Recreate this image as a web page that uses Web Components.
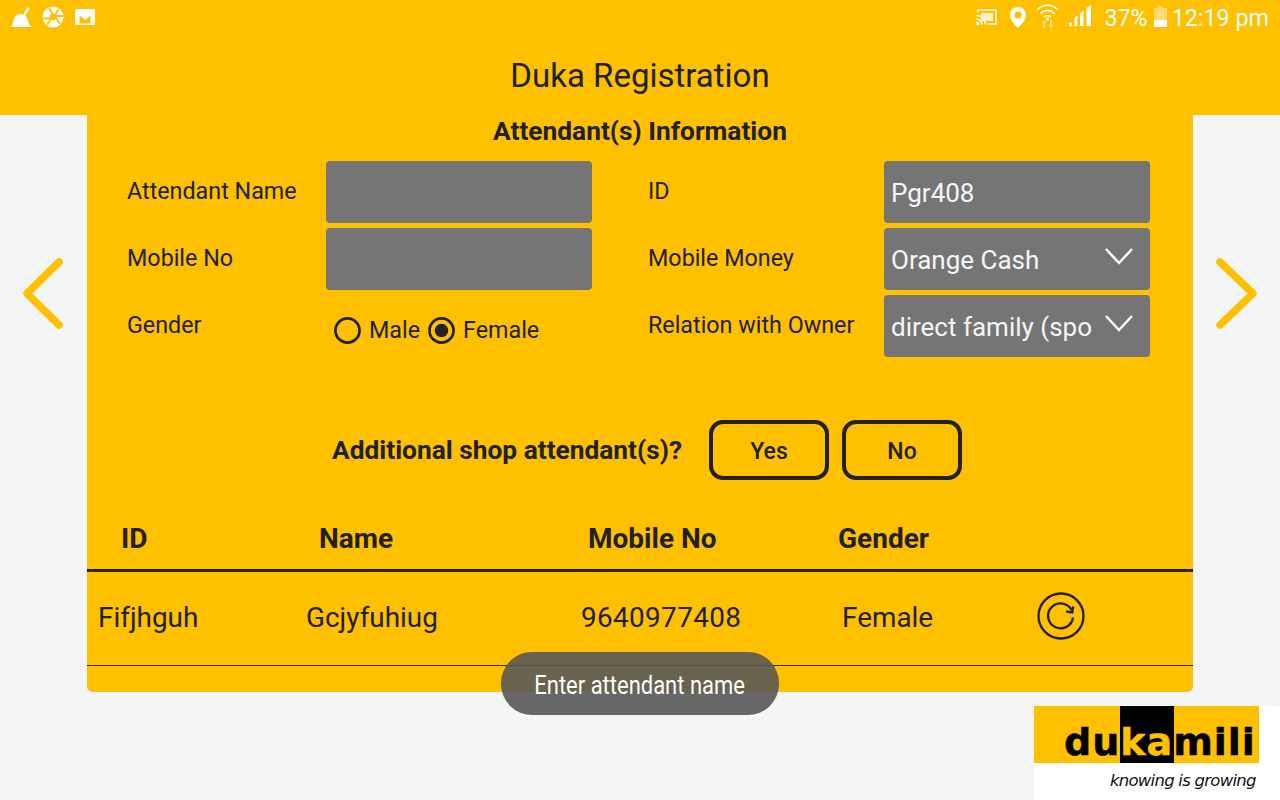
<!DOCTYPE html>
<html>
<head>
<meta charset="utf-8">
<title>Duka Registration</title>
<style>
  html,body{margin:0;height:100%}
  body{background:#f4f6f5;font-family:Roboto,"Noto Sans",sans-serif;color:#212121;overflow:hidden}
  dk-page{height:800px}
</style>
</head>
<body>
<dk-page>
  <dk-header slot="header">Duka Registration</dk-header>
  <dk-arrow slot="left" dir="left"></dk-arrow>
  <dk-card slot="card" heading="Attendant(s) Information">
    <dk-form slot="form">
      <dk-field label="Attendant Name"></dk-field>
      <dk-field label="ID" wide value="Pgr408"></dk-field>
      <dk-field label="Mobile No"></dk-field>
      <dk-field label="Mobile Money" wide value="Orange Cash" select></dk-field>
      <dk-field label="Gender" plain>
        <dk-radio>Male</dk-radio>
        <dk-radio checked>Female</dk-radio>
      </dk-field>
      <dk-field label="Relation with Owner" wide value="direct family (spo" select></dk-field>
    </dk-form>
    <dk-ask slot="ask" question="Additional shop attendant(s)?">
      <dk-button>Yes</dk-button>
      <dk-button>No</dk-button>
    </dk-ask>
    <dk-table slot="table"></dk-table>
  </dk-card>
  <dk-arrow slot="right" dir="right"></dk-arrow>
  <dk-toast slot="overlay">Enter attendant name</dk-toast>
  <dk-logo slot="overlay"></dk-logo>
</dk-page>

<script>
const YELLOW = "#ffc000";

class DkPage extends HTMLElement {
  constructor() { super(); this.attachShadow({ mode: "open" }); }
  connectedCallback() {
    this.shadowRoot.innerHTML = `
      <style>
        :host{display:grid;grid-template-columns:87px 1106px 87px;grid-template-rows:115px 577px 1fr;position:relative}
        .top{grid-column:1 / 4}
        .side{display:block}
      </style>
      <div class="top"><slot name="header"></slot></div>
      <div class="side"><slot name="left"></slot></div>
      <div><slot name="card"></slot></div>
      <div class="side"><slot name="right"></slot></div>
      <slot name="overlay"></slot>`;
  }
}

class DkHeader extends HTMLElement {
  constructor() { super(); this.attachShadow({ mode: "open" }); }
  connectedCallback() {
    this.shadowRoot.innerHTML = `
      <style>
        :host{display:block;height:115px;background:${YELLOW}}
        h1{margin:0;padding-top:2px;font:400 33px/76px Roboto,sans-serif;color:#212121;text-align:center}
      </style>
      <dk-status></dk-status>
      <h1><slot></slot></h1>`;
  }
}

class DkStatus extends HTMLElement {
  constructor() { super(); this.attachShadow({ mode: "open" }); }
  connectedCallback() {
    this.shadowRoot.innerHTML = `
      <style>
        :host{display:flex;justify-content:space-between;height:36px;color:#fff;font:400 23.300px/36px Roboto,sans-serif}
        .l,.r{display:flex;align-items:flex-start}
        .l{padding-left:10px}
        .r{padding-right:11px}
        svg{display:block}
        span{white-space:nowrap}
      </style>
      <div class="l">
        <!-- broom -->
        <svg width="23" height="20" viewBox="0 0 23 20" style="margin-top:7px"><path fill="#fff" d="M17 0l3 2-5 6c1.500 1.500 2.500 3.500 3 6 .5 2 1.500 4 4 6H0c3-2 3-5 4-8 .7-3 3-5 6-5 1.500 0 3 .3 3.500 1z"/></svg>
        <!-- aperture -->
        <svg width="22" height="22" viewBox="0 0 22 22" style="margin:6px 0 0 9px"><circle cx="11" cy="11" r="10.500" fill="#fff"/><g stroke="#ffc000" stroke-width="1.800" fill="none"><path d="M7 2.200L13.500 12M16.500 2.800L10.500 13.800M20.800 10H9.500M18 18L11.500 8.500M5 19L11.500 8.500M1.200 12.500h11.500"/></g><polygon points="11,7.500 14.200,9.300 14.200,12.800 11,14.600 7.800,12.800 7.800,9.300" fill="#ffc000"/></svg>
        <!-- gmail -->
        <svg width="20" height="16" viewBox="0 0 20 16" style="margin:9px 0 0 11px"><rect width="20" height="16" rx="1.500" fill="#fff"/><path fill="#ffc000" d="M4.500 6.500L10 11l5.500-4.500v8h-11z"/></svg>
      </div>
      <div class="r">
        <!-- cast -->
        <svg width="21" height="16" viewBox="0 0 21 16" style="margin-top:9px"><path fill="none" stroke="#fff" stroke-width="1.600" d="M2 3.500V1h18v14h-8"/><rect x="5" y="4" width="12" height="8" fill="#fff" opacity=".75"/><path fill="none" stroke="#fff" stroke-width="1.600" d="M.5 6.500c5 0 9 4 9 9M.5 10c3 0 5.500 2.500 5.500 5.500"/><circle cx="1.800" cy="14.200" r="1.800" fill="#fff"/></svg>
        <!-- pin -->
        <svg width="16" height="21" viewBox="0 0 16 21" style="margin:7px 0 0 13px"><path fill="#fff" fill-rule="evenodd" d="M8 0a8 8 0 0 1 8 8c0 4.500-4.500 9.500-8 13C4.500 17.500 0 12.500 0 8a8 8 0 0 1 8-8zm0 4.500a3.500 3.500 0 1 0 0 7 3.500 3.500 0 0 0 0-7z"/></svg>
        <!-- wifi with up/down arrows -->
        <svg width="23" height="24" viewBox="0 0 23 24" style="margin:4px 0 0 10px"><g fill="none" stroke="#fff" stroke-width="1.700"><path d="M1 6c6-6.300 15-6.300 21 0"/><path d="M4.500 9.500c4-4 10-4 14 0"/><path d="M8 13c2-2 5-2 7 0"/></g><circle cx="11.500" cy="15" r="1.500" fill="#fff"/><path fill="#fff" opacity=".55" d="M8 16l2.500 3H9v5H7v-5H5.500zM15 24l-2.500-3H14v-5h2v5h1.500z"/></svg>
        <!-- signal -->
        <svg width="22" height="21" viewBox="0 0 22 21" style="margin:5px 0 0 10px"><path fill="#fff" d="M0 17.500h3V21H0zM5.500 13l3-2.500V21h-3zM11 8.500l3.500-3V21H11zM17.500 3L22 0v21h-4.500z"/></svg>
        <span style="margin-left:13px">37%</span>
        <!-- battery -->
        <svg width="13" height="21" viewBox="0 0 13 21" style="margin:6px 0 0 6px"><path fill="#fff" opacity=".45" d="M4 0h5v2h4v12H0V2h4z"/><rect y="14" width="13" height="7" fill="#fff"/></svg>
        <span style="margin-left:5px">12:19 pm</span>
      </div>`;
  }
}

class DkArrow extends HTMLElement {
  constructor() { super(); this.attachShadow({ mode: "open" }); }
  connectedCallback() {
    const left = this.getAttribute("dir") === "left";
    this.shadowRoot.innerHTML = `
      <style>
        :host{display:block;padding-top:143px}
        svg{display:block}
      </style>
      <svg width="87" height="72" viewBox="0 0 87 72">
        <polyline fill="none" stroke="${YELLOW}" stroke-width="7.500" stroke-linecap="round" stroke-linejoin="round"
          points="${left ? "59,4 27,35.500 59,67" : "27,4 60,35.500 27,67"}"></polyline>
      </svg>`;
  }
}

class DkCard extends HTMLElement {
  constructor() { super(); this.attachShadow({ mode: "open" }); }
  connectedCallback() {
    this.shadowRoot.innerHTML = `
      <style>
        :host{display:block;height:577px;background:${YELLOW};border-radius:0 0 6px 6px}
        h2{margin:0;font:700 26.300px/32px Roboto,sans-serif;text-align:center;color:#212121;padding-bottom:2px}
      </style>
      <h2>${this.getAttribute("heading")}</h2>
      <slot name="form"></slot>
      <slot name="ask"></slot>
      <slot name="table"></slot>`;
  }
}

class DkForm extends HTMLElement {
  constructor() { super(); this.attachShadow({ mode: "open" }); }
  connectedCallback() {
    this.shadowRoot.innerHTML = `
      <style>
        :host{display:grid;grid-template-columns:521px 502px;grid-auto-rows:62px;row-gap:5px;padding:12px 0 0 40px}
      </style>
      <slot></slot>`;
  }
}

class DkField extends HTMLElement {
  constructor() { super(); this.attachShadow({ mode: "open" }); }
  connectedCallback() {
    const value = this.getAttribute("value") || "";
    const chevron = this.hasAttribute("select")
      ? `<svg width="30" height="18" viewBox="0 0 30 18"><polyline points="2,2 15,16 28,2" fill="none" stroke="#fff" stroke-width="2.500"/></svg>`
      : "";
    const control = this.hasAttribute("plain")
      ? `<div class="radios"><slot></slot></div>`
      : `<div class="box"><span>${value}</span>${chevron}</div>`;
    this.shadowRoot.innerHTML = `
      <style>
        :host{display:grid;grid-template-columns:${this.hasAttribute("wide") ? 236 : 199}px 266px;height:62px}
        label{font:400 23.300px/60px Roboto,sans-serif;color:#212121;white-space:nowrap}
        .box{position:relative;background:#757575;border-radius:4px;color:#f5f5f5;font:400 26px/64px Roboto,sans-serif;padding-left:7px;white-space:nowrap;overflow:hidden}
        .box svg{position:absolute;right:16px;top:19px}
        .radios{display:flex;align-items:center;padding:8px 0 0 8px;gap:8px}
      </style>
      <label>${this.getAttribute("label")}</label>
      ${control}`;
  }
}

class DkRadio extends HTMLElement {
  constructor() { super(); this.attachShadow({ mode: "open" }); }
  connectedCallback() {
    const dot = this.hasAttribute("checked") ? `<circle cx="14" cy="14" r="7" fill="#212121"/>` : "";
    this.shadowRoot.innerHTML = `
      <style>
        :host{display:inline-flex;align-items:center;gap:8px;font:400 23.300px/28px Roboto,sans-serif;color:#212121}
        svg{display:block}
      </style>
      <svg width="27" height="27" viewBox="0 0 28 28"><circle cx="14" cy="14" r="12.500" fill="none" stroke="#212121" stroke-width="2.800"/>${dot}</svg>
      <slot></slot>`;
  }
}

class DkAsk extends HTMLElement {
  constructor() { super(); this.attachShadow({ mode: "open" }); }
  connectedCallback() {
    this.shadowRoot.innerHTML = `
      <style>
        :host{display:flex;align-items:center;margin-top:63px;padding-left:245px;height:60px}
        b{font:700 26.300px/60px Roboto,sans-serif;color:#212121;width:377px;white-space:nowrap}
        .btns{display:flex;gap:13px}
      </style>
      <b>${this.getAttribute("question")}</b>
      <div class="btns"><slot></slot></div>`;
  }
}

class DkButton extends HTMLElement {
  constructor() { super(); this.attachShadow({ mode: "open" }); }
  connectedCallback() {
    this.shadowRoot.innerHTML = `
      <style>
        :host{display:flex;align-items:center;justify-content:center;box-sizing:border-box;width:120px;height:60px;border:4px solid #212121;border-radius:14px;padding-top:2px;font:500 23px/1 Roboto,sans-serif;color:#212121}
      </style>
      <slot></slot>`;
  }
}

class DkTable extends HTMLElement {
  constructor() { super(); this.attachShadow({ mode: "open" }); }
  connectedCallback() {
    this.shadowRoot.innerHTML = `
      <style>
        :host{display:block;margin-top:29px;color:#212121}
        .head,.row{display:grid;align-items:center;white-space:nowrap}
        .head{grid-template-columns:198px 269px 250px 1fr;padding-left:34px;height:60px;border-bottom:3px solid #2a2118;font:700 28px/58px Roboto,sans-serif}
        .row{grid-template-columns:208px 275px 261px 195px 1fr;padding:0 0 2px 11px;height:91px;border-bottom:1px solid #2a2118;font:400 27.900px/40px Roboto,sans-serif}
        .num{letter-spacing:.35px}
        svg{display:block;margin:-3px 0 0 0}
      </style>
      <div class="head"><span>ID</span><span>Name</span><span>Mobile No</span><span>Gender</span></div>
      <div class="row">
        <span>Fifjhguh</span><span>Gcjyfuhiug</span><span class="num">9640977408</span><span>Female</span>
        <svg width="48" height="48" viewBox="0 0 48 48" fill="none" stroke="#212121" stroke-width="2.300">
          <circle cx="24" cy="24" r="22.500"/>
          <path d="M36 25.500a12.500 12.500 0 1 1-1.200-7.200"/>
          <path d="M29 19.500l6.300 1 .9-6"/>
        </svg>
      </div>`;
  }
}

class DkToast extends HTMLElement {
  constructor() { super(); this.attachShadow({ mode: "open" }); }
  connectedCallback() {
    this.shadowRoot.innerHTML = `
      <style>
        :host{position:absolute;left:501px;top:652px;width:278px;height:63px;display:flex;align-items:center;justify-content:center;border-radius:31px;background:rgba(88,88,88,.9);color:#fff;font:400 26px/1 Roboto,sans-serif;white-space:nowrap}
        span{display:inline-block;transform:scaleX(.845);margin-top:3px}
      </style>
      <span><slot></slot></span>`;
  }
}

class DkLogo extends HTMLElement {
  constructor() { super(); this.attachShadow({ mode: "open" }); }
  connectedCallback() {
    this.shadowRoot.innerHTML = `
      <style>
        :host{position:absolute;left:1034px;top:706px;width:246px;height:94px;background:#fff;display:block;overflow:hidden}
        .band{position:relative;width:225px;height:57px;background:${YELLOW}}
        .block{position:absolute;left:86px;top:0;width:54px;height:57px;background:#000}
        .word{position:absolute;left:30px;top:13px;font:700 38px/46px "DejaVu Sans",sans-serif;color:#000;letter-spacing:1px;-webkit-text-stroke:.5px;white-space:nowrap}
        .word i{font-style:normal;color:${YELLOW}}
        .tag{position:absolute;left:76px;top:64px;font:italic 400 16.500px/22px "DejaVu Sans",sans-serif;color:#111;white-space:nowrap;letter-spacing:-.75px}
      </style>
      <div class="band"><div class="block"></div><div class="word">du<i>ka</i>mili</div></div>
      <div class="tag">knowing is growing</div>`;
  }
}

customElements.define("dk-page", DkPage);
customElements.define("dk-header", DkHeader);
customElements.define("dk-status", DkStatus);
customElements.define("dk-arrow", DkArrow);
customElements.define("dk-card", DkCard);
customElements.define("dk-form", DkForm);
customElements.define("dk-field", DkField);
customElements.define("dk-radio", DkRadio);
customElements.define("dk-ask", DkAsk);
customElements.define("dk-button", DkButton);
customElements.define("dk-table", DkTable);
customElements.define("dk-toast", DkToast);
customElements.define("dk-logo", DkLogo);
</script>
</body>
</html>
